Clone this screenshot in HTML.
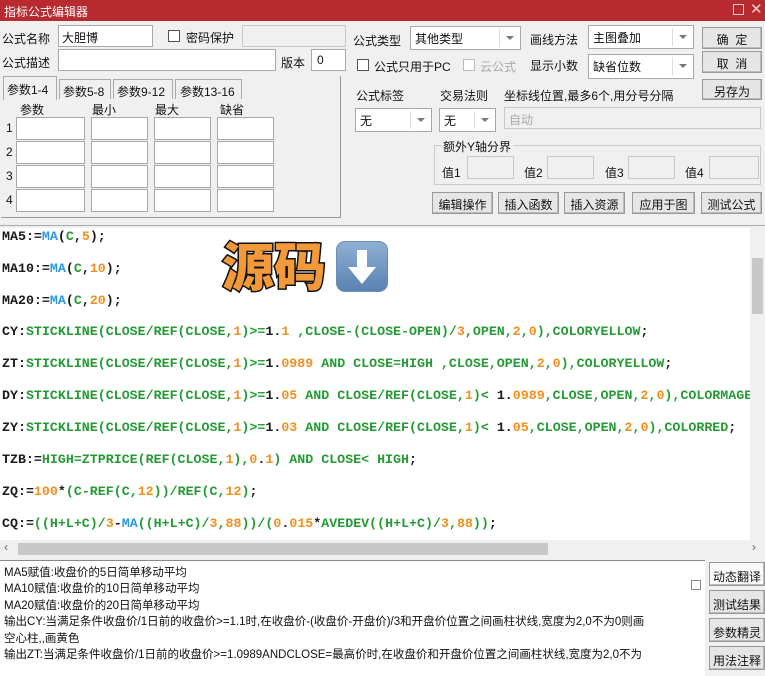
<!DOCTYPE html><html><head><meta charset="utf-8"><style>
*{margin:0;padding:0;box-sizing:border-box}
body{width:765px;height:676px;overflow:hidden;background:#f0f0f0;font-family:"Liberation Sans","Noto Sans CJK SC",sans-serif;font-size:12px;color:#111;position:relative}
.a{position:absolute;white-space:nowrap}
.in{position:absolute;background:#fff;border:1px solid #a8a8a8}
.dis{position:absolute;background:#f0f0f0;border:1px solid #c8c8c8}
.btn{position:absolute;background:#e6e6e6;border:1px solid #999;text-align:center;font-size:12px;box-shadow:inset -1px -1px 0 #bbb}
.cb{position:absolute;width:12px;height:12px;border:1px solid #555;background:#fff}
.dd{position:absolute;background:#fff;border:1px solid #a8a8a8;padding:3px 4px}
.dd:after{content:"";position:absolute;right:6px;top:9px;border:4px solid transparent;border-top:4px solid #777}
.dd i{position:absolute;right:20px;top:2px;bottom:2px;border-left:1px solid #ddd}
#code{position:absolute;left:0;top:228px;width:750px;height:312px;background:#fff;overflow:hidden}
#code div{position:absolute;left:2px;font-family:"Liberation Mono",monospace;font-weight:bold;font-size:13.3px;color:#1a1a1a;white-space:pre}
.g{color:#259a35}.o{color:#f0901e}.b{color:#2a98e0}
</style></head><body>
<div class="a" style="left:0;top:0;width:765px;height:21px;background:#b62a30"></div>
<div class="a" style="left:4px;top:3px;color:#fff;font-size:12px">指标公式编辑器</div>
<div class="a" style="left:733px;top:4px;width:11px;height:11px;border:1px solid #f3d0d0"></div>
<div class="a" style="left:750px;top:0px;color:#f3d0d0;font-size:15px">✕</div>

<div class="a" style="left:2px;top:30px">公式名称</div>
<div class="in" style="left:58px;top:25px;width:95px;height:22px;padding:3px 3px">大胆博</div>
<div class="cb" style="left:168px;top:30px"></div><div class="a" style="left:186px;top:29px">密码保护</div>
<div class="dis" style="left:242px;top:25px;width:104px;height:22px"></div>
<div class="a" style="left:2px;top:54px">公式描述</div>
<div class="in" style="left:58px;top:49px;width:218px;height:22px"></div>
<div class="a" style="left:281px;top:54px">版本</div>
<div class="in" style="left:311px;top:49px;width:35px;height:22px;padding:3px 5px">0</div>

<div class="a" style="left:1px;top:76px;width:340px;height:142px;border-right:1px solid #999;border-bottom:1px solid #999"></div>
<div class="a" style="left:3px;top:76px;width:54px;height:24px;background:#f0f0f0;border:1px solid #aaa;border-bottom:none;padding:4px 3px">参数1-4</div>
<div class="a" style="left:59px;top:79px;width:52px;height:20px;border:1px solid #aaa;border-bottom:none;padding:3px 3px">参数5-8</div>
<div class="a" style="left:113px;top:79px;width:60px;height:20px;border:1px solid #aaa;border-bottom:none;padding:3px 3px">参数9-12</div>
<div class="a" style="left:175px;top:79px;width:67px;height:20px;border:1px solid #aaa;border-bottom:none;padding:3px 4px">参数13-16</div>
<div class="a" style="left:20px;top:101px">参数</div><div class="a" style="left:92px;top:101px">最小</div><div class="a" style="left:155px;top:101px">最大</div><div class="a" style="left:220px;top:101px">缺省</div>
<div class="a" style="left:6px;top:121px">1</div><div class="a" style="left:6px;top:145px">2</div><div class="a" style="left:6px;top:169px">3</div><div class="a" style="left:6px;top:193px">4</div>
<div class="in" style="left:16px;top:117px;width:69px;height:23px"></div><div class="in" style="left:91px;top:117px;width:57px;height:23px"></div><div class="in" style="left:154px;top:117px;width:57px;height:23px"></div><div class="in" style="left:217px;top:117px;width:57px;height:23px"></div>
<div class="in" style="left:16px;top:141px;width:69px;height:23px"></div><div class="in" style="left:91px;top:141px;width:57px;height:23px"></div><div class="in" style="left:154px;top:141px;width:57px;height:23px"></div><div class="in" style="left:217px;top:141px;width:57px;height:23px"></div>
<div class="in" style="left:16px;top:165px;width:69px;height:23px"></div><div class="in" style="left:91px;top:165px;width:57px;height:23px"></div><div class="in" style="left:154px;top:165px;width:57px;height:23px"></div><div class="in" style="left:217px;top:165px;width:57px;height:23px"></div>
<div class="in" style="left:16px;top:189px;width:69px;height:23px"></div><div class="in" style="left:91px;top:189px;width:57px;height:23px"></div><div class="in" style="left:154px;top:189px;width:57px;height:23px"></div><div class="in" style="left:217px;top:189px;width:57px;height:23px"></div>

<div class="a" style="left:353px;top:32px">公式类型</div>
<div class="dd" style="left:410px;top:26px;width:111px;height:24px">其他类型<i></i></div>
<div class="a" style="left:530px;top:31px">画线方法</div>
<div class="dd" style="left:588px;top:25px;width:106px;height:24px">主图叠加<i></i></div>
<div class="cb" style="left:357px;top:59px"></div><div class="a" style="left:374px;top:58px">公式只用于PC</div>
<div class="cb" style="left:463px;top:59px;border-color:#bbb"></div><div class="a" style="left:480px;top:58px;color:#aaa">云公式</div>
<div class="a" style="left:530px;top:57px">显示小数</div>
<div class="dd" style="left:588px;top:54px;width:106px;height:25px">缺省位数<i></i></div>
<div class="btn" style="left:702px;top:27px;width:60px;height:22px;padding-top:3px">确&nbsp;&nbsp;定</div>
<div class="btn" style="left:702px;top:51px;width:60px;height:22px;padding-top:3px">取&nbsp;&nbsp;消</div>
<div class="btn" style="left:702px;top:79px;width:60px;height:21px;padding-top:3px">另存为</div>
<div class="a" style="left:356px;top:87px">公式标签</div>
<div class="a" style="left:440px;top:87px">交易法则</div>
<div class="a" style="left:504px;top:87px">坐标线位置,最多6个,用分号分隔</div>
<div class="dd" style="left:355px;top:108px;width:77px;height:24px">无<i></i></div>
<div class="dd" style="left:439px;top:108px;width:57px;height:24px">无<i></i></div>
<div class="dis" style="left:504px;top:107px;width:257px;height:22px;color:#aaa;padding:3px 4px">自动</div>
<div class="a" style="left:434px;top:145px;width:327px;height:40px;border:1px solid #ccc"></div>
<div class="a" style="left:441px;top:138px;background:#f0f0f0;padding:0 2px">额外Y轴分界</div>
<div class="a" style="left:442px;top:164px">值1</div><div class="dis" style="left:467px;top:156px;width:47px;height:23px"></div>
<div class="a" style="left:524px;top:164px">值2</div><div class="dis" style="left:547px;top:156px;width:47px;height:23px"></div>
<div class="a" style="left:605px;top:164px">值3</div><div class="dis" style="left:628px;top:156px;width:47px;height:23px"></div>
<div class="a" style="left:685px;top:164px">值4</div><div class="dis" style="left:709px;top:156px;width:50px;height:23px"></div>
<div class="btn" style="left:432px;top:192px;width:61px;height:22px;padding-top:3px">编辑操作</div>
<div class="btn" style="left:498px;top:192px;width:61px;height:22px;padding-top:3px">插入函数</div>
<div class="btn" style="left:564px;top:192px;width:61px;height:22px;padding-top:3px">插入资源</div>
<div class="btn" style="left:632px;top:192px;width:63px;height:22px;padding-top:3px">应用于图</div>
<div class="btn" style="left:701px;top:192px;width:61px;height:22px;padding-top:3px">测试公式</div>

<div class="a" style="left:0;top:225px;width:765px;height:1px;background:#aaa"></div>
<div id="code">
<div style="top:1px">MA5:=<span class="b">MA</span>(<span class="g">C</span>,<span class="o">5</span>);</div>
<div style="top:33px">MA10:=<span class="b">MA</span>(<span class="g">C</span>,<span class="o">10</span>);</div>
<div style="top:65px">MA20:=<span class="b">MA</span>(<span class="g">C</span>,<span class="o">20</span>);</div>
<div style="top:96px">CY:<span class="g">STICKLINE(CLOSE/REF(CLOSE,</span><span class="o">1</span><span class="g">)&gt;=</span>1.<span class="o">1</span> <span class="g">,CLOSE-(CLOSE-OPEN)/</span><span class="o">3</span><span class="g">,OPEN,</span><span class="o">2</span><span class="g">,</span><span class="o">0</span><span class="g">),COLORYELLOW</span>;</div>
<div style="top:128px">ZT:<span class="g">STICKLINE(CLOSE/REF(CLOSE,</span><span class="o">1</span><span class="g">)&gt;=</span>1.<span class="o">0989</span> <span class="g">AND CLOSE=HIGH ,CLOSE,OPEN,</span><span class="o">2</span><span class="g">,</span><span class="o">0</span><span class="g">),COLORYELLOW</span>;</div>
<div style="top:160px">DY:<span class="g">STICKLINE(CLOSE/REF(CLOSE,</span><span class="o">1</span><span class="g">)&gt;=</span>1.<span class="o">05</span> <span class="g">AND CLOSE/REF(CLOSE,</span><span class="o">1</span><span class="g">)&lt; </span>1.<span class="o">0989</span><span class="g">,CLOSE,OPEN,</span><span class="o">2</span><span class="g">,</span><span class="o">0</span><span class="g">),COLORMAGENTA</span>;</div>
<div style="top:192px">ZY:<span class="g">STICKLINE(CLOSE/REF(CLOSE,</span><span class="o">1</span><span class="g">)&gt;=</span>1.<span class="o">03</span> <span class="g">AND CLOSE/REF(CLOSE,</span><span class="o">1</span><span class="g">)&lt; </span>1.<span class="o">05</span><span class="g">,CLOSE,OPEN,</span><span class="o">2</span><span class="g">,</span><span class="o">0</span><span class="g">),COLORRED</span>;</div>
<div style="top:224px">TZB:=<span class="g">HIGH=ZTPRICE(REF(CLOSE,</span><span class="o">1</span><span class="g">),</span><span class="o">0</span>.<span class="o">1</span><span class="g">) AND CLOSE&lt; HIGH</span>;</div>
<div style="top:256px">ZQ:=<span class="o">100</span>*<span class="g">(C-REF(C,</span><span class="o">12</span><span class="g">))/REF(C,</span><span class="o">12</span><span class="g">)</span>;</div>
<div style="top:288px">CQ:=<span class="g">((H+L+C)/</span><span class="o">3</span>-<span class="b">MA</span><span class="g">((H+L+C)/</span><span class="o">3</span><span class="g">,</span><span class="o">88</span><span class="g">))/(</span><span class="o">0</span>.<span class="o">015</span>*<span class="g">AVEDEV((H+L+C)/</span><span class="o">3</span><span class="g">,</span><span class="o">88</span><span class="g">))</span>;</div>
<div style="top:8px;left:222px;font-family:'Noto Sans CJK SC',sans-serif;font-weight:900;font-size:52px;line-height:56px;color:#f29a3a;-webkit-text-stroke:3px #111;paint-order:stroke fill">源码</div>
<div style="top:13px;left:336px;width:52px;height:51px;border-radius:9px;background:linear-gradient(#8fb0d4,#5a82b2);border:1px solid #6c8cb5"></div>
<svg style="position:absolute;left:336px;top:13px" width="52" height="51" viewBox="0 0 52 51"><path d="M21 9h10v17h9L26 43 12 26h9z" fill="#fff"/></svg>
</div>
<div class="a" style="left:750px;top:228px;width:15px;height:312px;background:#f0f0f0"></div>
<div class="a" style="left:752px;top:258px;width:11px;height:56px;background:#c8c8c8"></div>
<div class="a" style="left:0;top:540px;width:765px;height:18px;background:#f0f0f0"></div>
<div class="a" style="left:18px;top:543px;width:530px;height:12px;background:#c8c8c8"></div>
<div class="a" style="left:4px;top:540px;color:#666">‹</div><div class="a" style="left:752px;top:540px;color:#666">›</div>

<div class="a" style="left:0;top:560px;width:705px;height:116px;background:#fff;border-top:1px solid #888"></div>
<div class="a" style="left:4px;top:565px;font-size:11.5px;line-height:16.4px;white-space:normal;width:680px">MA5赋值:收盘价的5日简单移动平均<br>MA10赋值:收盘价的10日简单移动平均<br>MA20赋值:收盘价的20日简单移动平均<br>输出CY:当满足条件收盘价/1日前的收盘价&gt;=1.1时,在收盘价-(收盘价-开盘价)/3和开盘价位置之间画柱状线,宽度为2,0不为0则画<br>空心柱,,画黄色<br>输出ZT:当满足条件收盘价/1日前的收盘价&gt;=1.0989ANDCLOSE=最高价时,在收盘价和开盘价位置之间画柱状线,宽度为2,0不为</div>
<div class="a" style="left:691px;top:580px;width:10px;height:10px;border:1px solid #888;background:#fff"></div>
<div class="btn" style="left:709px;top:562px;width:56px;height:24px;padding-top:5px;background:#fafafa">动态翻译</div>
<div class="btn" style="left:709px;top:590px;width:56px;height:24px;padding-top:5px">测试结果</div>
<div class="btn" style="left:709px;top:618px;width:56px;height:24px;padding-top:5px">参数精灵</div>
<div class="btn" style="left:709px;top:646px;width:56px;height:24px;padding-top:5px">用法注释</div>
</body></html>
